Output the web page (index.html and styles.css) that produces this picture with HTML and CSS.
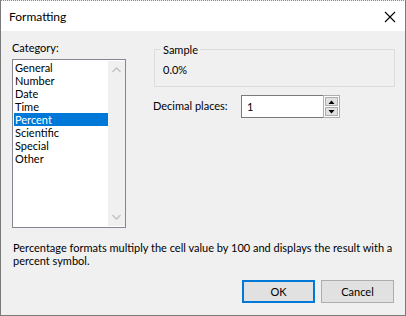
FILE: index.html
```html
<!DOCTYPE html>
<html>
<head>
<meta charset="utf-8">
<link rel="stylesheet" href="styles.css">
</head>
<body>
<div class="window">
  <div class="titlebar">
    <span class="title">Formatting</span>
    <svg class="close" width="12" height="12" viewBox="0 0 12 12"><path d="M1 1 L11 11 M11 1 L1 11" stroke="#000" stroke-width="1.1" fill="none"/></svg>
  </div>
  <div class="body">
    <div class="main">
      <div class="left">
        <div class="label">Category:</div>
        <div class="listbox">
          <ul class="items">
            <li>General</li>
            <li>Number</li>
            <li>Date</li>
            <li>Time</li>
            <li class="selected">Percent</li>
            <li>Scientific</li>
            <li>Special</li>
            <li>Other</li>
          </ul>
          <div class="scrollbar">
            <svg width="9" height="6" viewBox="0 0 9 6"><path d="M0.5 5 L4.5 1 L8.5 5" stroke="#c2c2c2" stroke-width="1.3" fill="none"/></svg>
            <svg width="9" height="6" viewBox="0 0 9 6"><path d="M0.5 1 L4.5 5 L8.5 1" stroke="#c2c2c2" stroke-width="1.3" fill="none"/></svg>
          </div>
        </div>
      </div>
      <div class="right">
        <fieldset class="sample">
          <legend>Sample</legend>
          <div class="sample-value">0.0%</div>
        </fieldset>
        <div class="decimal-row">
          <span class="decimal-label">Decimal places:</span>
          <div class="spin">
            <div class="spin-input">1</div>
            <div class="spin-buttons">
              <div class="spin-btn"><svg width="7" height="4" viewBox="0 0 7 4"><path d="M0.5 4 L3.5 0.5 L6.5 4 Z" fill="#000"/></svg></div>
              <div class="spin-btn"><svg width="7" height="4" viewBox="0 0 7 4"><path d="M0.5 0 L6.5 0 L3.5 3.5 Z" fill="#000"/></svg></div>
            </div>
          </div>
        </div>
      </div>
    </div>
    <p class="desc">Percentage formats multiply the cell value by 100 and displays the result with a percent symbol.</p>
    <div class="buttons">
      <button class="btn default">OK</button>
      <button class="btn">Cancel</button>
    </div>
  </div>
</div>
</body>
</html>
```

FILE: styles.css
```css
* { box-sizing: border-box; }
html, body { margin: 0; padding: 0; }
body {
  font-family: "Lato", "Liberation Sans", sans-serif;
  font-size: 11px;
  line-height: 13px;
  color: #000;
  background: #fff;
}
.window {
  width: 406px;
  height: 316px;
  border: 1px solid #7a7a7a;
  border-top: 1px dotted #8a8a8a;
  display: flex;
  flex-direction: column;
  background: #f0f0f0;
}
.titlebar {
  height: 30px;
  background: #fff;
  display: flex;
  align-items: center;
  justify-content: space-between;
  padding: 0 9px 0 8px;
}
.title { font-size: 12px; padding-top: 1px; }
.close { display: block; margin-top: 1px; }
.body {
  flex: 1;
  padding: 10px 10px 0 11px;
  display: flex;
  flex-direction: column;
}
.main { display: flex; gap: 28px; }
.left { width: 114px; }
.label { height: 13px; }
.listbox {
  margin-top: 5px;
  width: 114px;
  height: 169px;
  border: 1px solid #828790;
  background: #fff;
  padding: 1px 0 1px 1px;
  display: flex;
}
.items {
  list-style: none;
  margin: 0;
  padding: 0;
  flex: 1;
}
.items li { height: 13px; padding-left: 1px; }
.items li.selected { background: #0078d7; color: #fff; }
.scrollbar {
  width: 17px;
  background: #f0f0f0;
  display: flex;
  flex-direction: column;
  justify-content: space-between;
  align-items: center;
  padding: 6px 0 6px 0;
}
.scrollbar svg { display: block; }
.right { flex: 1; padding-top: 2px; }
.sample {
  margin: 0;
  border: 1px solid #dcdcdc;
  padding: 0 0 10px 6px;
  min-inline-size: 0;
}
.sample legend { padding: 0 2px; line-height: 13px; }
.sample-value { margin-top: 7px; padding-left: 2px; }
.decimal-row { display: flex; margin-top: 8px; }
.decimal-label { width: 87px; padding-top: 4px; margin-left: -1px; }
.spin { display: flex; width: 99px; height: 23px; margin-left: 1px; }
.spin-input {
  flex: 1;
  background: #fff;
  border: 1px solid #7a7a7a;
  border-right: none;
  padding: 4px 0 0 5px;
}
.spin-buttons {
  width: 17px;
  background: #fff;
  border: 1px solid #adadad;
  padding: 1px;
  display: flex;
  flex-direction: column;
  gap: 1px;
}
.spin-btn {
  flex: 1;
  background: #e1e1e1;
  border: 1px solid #adadad;
  display: flex;
  align-items: center;
  justify-content: center;
}
.spin-btn svg { display: block; }
.desc { margin: 13px 0 0 1px; }
.buttons {
  margin-top: 13px;
  display: flex;
  justify-content: flex-end;
  gap: 6px;
  padding-right: 1px;
}
.btn {
  width: 73px;
  height: 23px;
  background: #e1e1e1;
  border: 1px solid #adadad;
  font-family: inherit;
  font-size: 11px;
  color: #000;
  padding: 0;
  margin: 0;
}
.btn.default { border: 2px solid #0078d7; }
```
